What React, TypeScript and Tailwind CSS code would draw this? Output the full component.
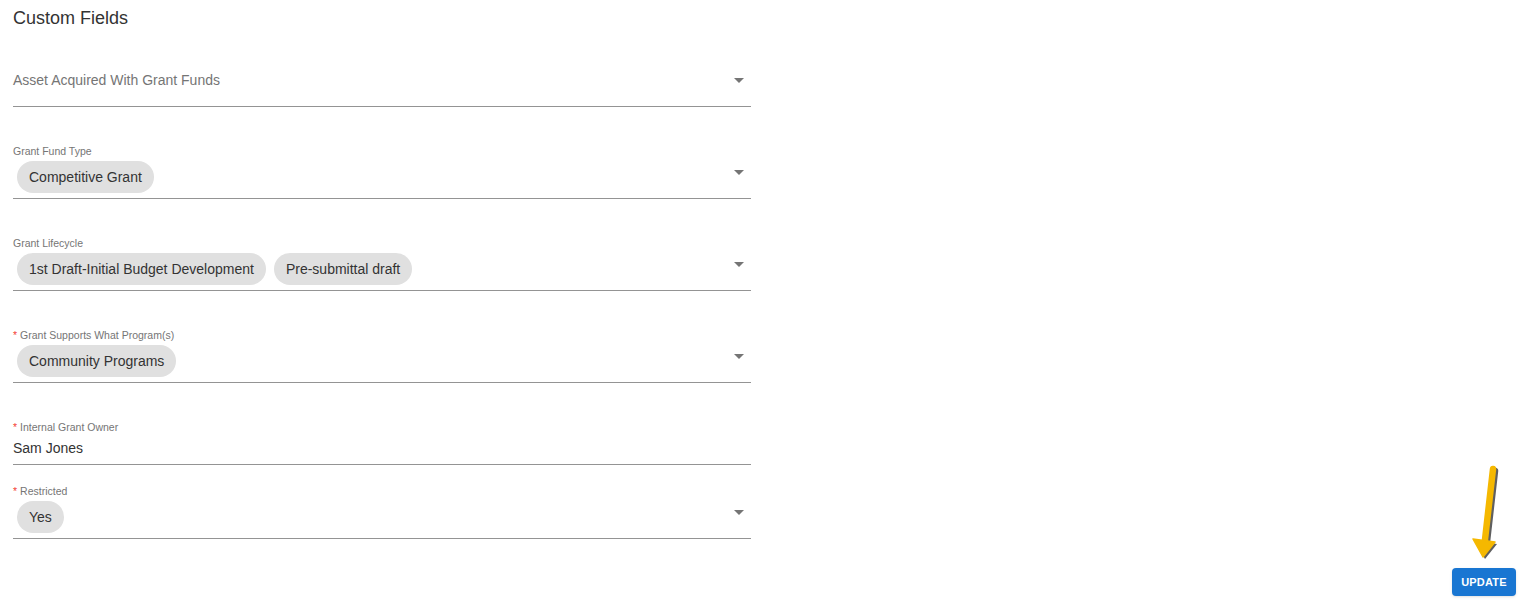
import { ReactNode } from "react"

const font = { fontFamily: '"Liberation Sans", Arial, sans-serif' }

function Caret({ className = "" }: { className?: string }) {
  return (
    <svg viewBox="0 0 24 24" className={`absolute right-0 h-6 w-6 fill-[#757575] ${className}`}>
      <path d="M7 10l5 5 5-5z" />
    </svg>
  )
}

function Chip({ label }: { label: string }) {
  return (
    <span className="inline-flex h-8 items-center rounded-full bg-[#e0e0e0] px-3 text-[14px] text-[#333]">
      {label}
    </span>
  )
}

function Label({ text, required }: { text: string; required?: boolean }) {
  return (
    <div className="h-[13px] text-[10.5px] leading-[13px] text-[#757575]">
      {required && <span className="mr-[3px] text-[#f44336]">*</span>}
      {text}
    </div>
  )
}

function ChipField({
  label,
  chips,
  required,
  top = "pt-[38px]",
}: {
  label: string
  chips: string[]
  required?: boolean
  top?: string
}) {
  return (
    <div className={`${top} border-b border-[#949494] pb-[5px]`}>
      <Label text={label} required={required} />
      <div className="relative mt-[3px] flex h-8 items-center gap-2 pl-1">
        {chips.map((c) => (
          <Chip key={c} label={c} />
        ))}
        <Caret className="top-[-1.5px]" />
      </div>
    </div>
  )
}

function Arrow() {
  return (
    <svg className="absolute left-[1465px] top-[460px]" width="40" height="105" viewBox="0 0 40 105">
      <g transform="translate(2 2)" opacity="0.75">
        <line x1="28" y1="9" x2="19.5" y2="84" stroke="#2a2a2a" strokeWidth="6.5" strokeLinecap="round" />
        <polygon points="8,79 30,82 18,97" fill="#2a2a2a" />
      </g>
      <line x1="28" y1="9" x2="19.5" y2="84" stroke="#f5b800" strokeWidth="6.5" strokeLinecap="round" />
      <polygon points="8,79 30,82 18,97" fill="#f5b800" stroke="#f5b800" strokeWidth="1.5" strokeLinejoin="round" />
    </svg>
  )
}

function Section({ children }: { children: ReactNode }) {
  return <div className="w-[738px]">{children}</div>
}

export default function App() {
  return (
    <div className="relative h-[609px] w-[1526px] bg-white" style={font}>
      <div className="flex flex-col pl-[13px]">
        <div className="h-9 text-[18px] leading-9 text-[#333]">Custom Fields</div>
        <Section>
          <div className="border-b border-[#949494] pt-[34px] pb-4">
            <div className="relative flex h-5 items-center text-[14px] text-[#757575]">
              Asset Acquired With Grant Funds
              <Caret />
            </div>
          </div>
          <ChipField label="Grant Fund Type" chips={["Competitive Grant"]} />
          <ChipField
            label="Grant Lifecycle"
            chips={["1st Draft-Initial Budget Development", "Pre-submittal draft"]}
          />
          <ChipField label="Grant Supports What Program(s)" required chips={["Community Programs"]} />
          <div className="border-b border-[#949494] pt-[38px] pb-[6px]">
            <Label text="Internal Grant Owner" required />
            <div className="mt-1 h-5 text-[14px] leading-5 text-[#333]">Sam Jones</div>
          </div>
          <ChipField label="Restricted" required chips={["Yes"]} top="pt-5" />
        </Section>
      </div>
      <div className="mt-[29px] flex justify-end pr-[10px]">
        <button className="h-7 w-16 rounded bg-[#1976d2] text-[11px] font-bold tracking-[0.2px] text-white shadow-sm">
          UPDATE
        </button>
      </div>
      <Arrow />
    </div>
  )
}
